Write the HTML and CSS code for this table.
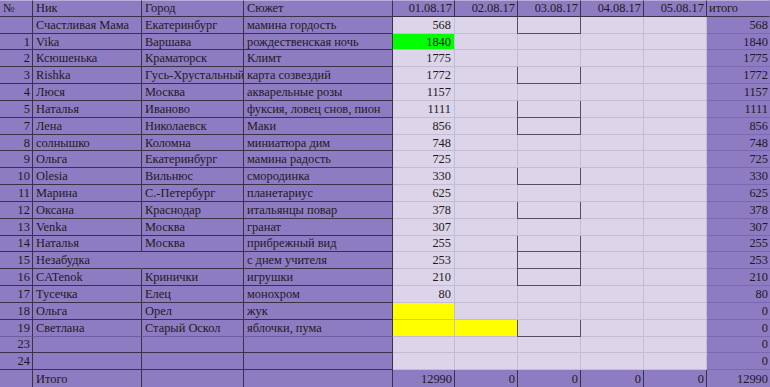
FILE: index.html
```html
<!DOCTYPE html>
<html lang="ru">
<head>
<meta charset="utf-8">
<title>Таблица</title>
<link rel="stylesheet" href="styles.css">
</head>
<body>
<div class="sheet">
  <div class="row hdr">
    <div class="c">№</div><div class="c">Ник</div><div class="c">Город</div><div class="c">Сюжет</div>
    <div class="c r">01.08.17</div><div class="c r">02.08.17</div><div class="c r">03.08.17</div><div class="c r">04.08.17</div><div class="c r">05.08.17</div><div class="c tl">итого</div>
  </div>
  <div class="row">
    <div class="c r"></div><div class="c">Счастливая Мама</div><div class="c">Екатеринбург</div><div class="c">мамина гордость</div>
    <div class="d r">568</div><div class="d"></div><div class="d bx"></div><div class="d"></div><div class="d"></div><div class="t">568</div>
  </div>
  <div class="row">
    <div class="c r">1</div><div class="c">Vika</div><div class="c">Варшава</div><div class="c">рождественская ночь</div>
    <div class="d r green">1840</div><div class="d"></div><div class="d"></div><div class="d"></div><div class="d"></div><div class="t">1840</div>
  </div>
  <div class="row">
    <div class="c r">2</div><div class="c">Ксюшенька</div><div class="c">Краматорск</div><div class="c">Климт</div>
    <div class="d r">1775</div><div class="d"></div><div class="d"></div><div class="d"></div><div class="d"></div><div class="t">1775</div>
  </div>
  <div class="row">
    <div class="c r">3</div><div class="c">Rishka</div><div class="c">Гусь-Хрустальный</div><div class="c">карта созвездий</div>
    <div class="d r">1772</div><div class="d"></div><div class="d bx"></div><div class="d"></div><div class="d"></div><div class="t">1772</div>
  </div>
  <div class="row">
    <div class="c r">4</div><div class="c">Люся</div><div class="c">Москва</div><div class="c">акварельные розы</div>
    <div class="d r">1157</div><div class="d"></div><div class="d"></div><div class="d"></div><div class="d"></div><div class="t">1157</div>
  </div>
  <div class="row">
    <div class="c r">5</div><div class="c">Наталья</div><div class="c">Иваново</div><div class="c">фуксия, ловец снов, пион</div>
    <div class="d r">1111</div><div class="d"></div><div class="d bx"></div><div class="d"></div><div class="d"></div><div class="t">1111</div>
  </div>
  <div class="row">
    <div class="c r">7</div><div class="c">Лена</div><div class="c">Николаевск</div><div class="c">Маки</div>
    <div class="d r">856</div><div class="d"></div><div class="d bx"></div><div class="d"></div><div class="d"></div><div class="t">856</div>
  </div>
  <div class="row">
    <div class="c r">8</div><div class="c">солнышко</div><div class="c">Коломна</div><div class="c">миниатюра дим</div>
    <div class="d r">748</div><div class="d"></div><div class="d"></div><div class="d"></div><div class="d"></div><div class="t">748</div>
  </div>
  <div class="row">
    <div class="c r">9</div><div class="c">Ольга</div><div class="c">Екатеринбург</div><div class="c">мамина радость</div>
    <div class="d r">725</div><div class="d"></div><div class="d"></div><div class="d"></div><div class="d"></div><div class="t">725</div>
  </div>
  <div class="row">
    <div class="c r">10</div><div class="c">Olesia</div><div class="c">Вильнюс</div><div class="c">смородинка</div>
    <div class="d r">330</div><div class="d"></div><div class="d bx"></div><div class="d"></div><div class="d"></div><div class="t">330</div>
  </div>
  <div class="row">
    <div class="c r">11</div><div class="c">Марина</div><div class="c">С.-Петербург</div><div class="c">планетариус</div>
    <div class="d r">625</div><div class="d"></div><div class="d"></div><div class="d"></div><div class="d"></div><div class="t">625</div>
  </div>
  <div class="row">
    <div class="c r">12</div><div class="c">Оксана</div><div class="c">Краснодар</div><div class="c">итальянцы повар</div>
    <div class="d r">378</div><div class="d"></div><div class="d bx"></div><div class="d"></div><div class="d"></div><div class="t">378</div>
  </div>
  <div class="row">
    <div class="c r">13</div><div class="c">Venka</div><div class="c">Москва</div><div class="c">гранат</div>
    <div class="d r">307</div><div class="d"></div><div class="d"></div><div class="d"></div><div class="d"></div><div class="t">307</div>
  </div>
  <div class="row">
    <div class="c r">14</div><div class="c">Наталья</div><div class="c">Москва</div><div class="c">прибрежный вид</div>
    <div class="d r">255</div><div class="d"></div><div class="d bx"></div><div class="d"></div><div class="d"></div><div class="t">255</div>
  </div>
  <div class="row">
    <div class="c r">15</div><div class="c open">Незабудка</div><div class="c"></div><div class="c">с днем учителя</div>
    <div class="d r">253</div><div class="d"></div><div class="d bx"></div><div class="d"></div><div class="d"></div><div class="t">253</div>
  </div>
  <div class="row">
    <div class="c r">16</div><div class="c">CATenok</div><div class="c">Кринички</div><div class="c">игрушки</div>
    <div class="d r">210</div><div class="d"></div><div class="d bx"></div><div class="d"></div><div class="d"></div><div class="t">210</div>
  </div>
  <div class="row">
    <div class="c r">17</div><div class="c">Тусечка</div><div class="c">Елец</div><div class="c">монохром</div>
    <div class="d r">80</div><div class="d"></div><div class="d"></div><div class="d"></div><div class="d"></div><div class="t">80</div>
  </div>
  <div class="row">
    <div class="c r">18</div><div class="c">Ольга</div><div class="c">Орел</div><div class="c">жук</div>
    <div class="d r yellow"></div><div class="d"></div><div class="d"></div><div class="d"></div><div class="d"></div><div class="t">0</div>
  </div>
  <div class="row soft">
    <div class="c r">19</div><div class="c">Светлана</div><div class="c">Старый Оскол</div><div class="c">яблочки, пума</div>
    <div class="d r yellow"></div><div class="d yellow"></div><div class="d bx"></div><div class="d"></div><div class="d"></div><div class="t">0</div>
  </div>
  <div class="row">
    <div class="c r">23</div><div class="c"></div><div class="c"></div><div class="c"></div>
    <div class="d"></div><div class="d"></div><div class="d"></div><div class="d"></div><div class="d"></div><div class="t">0</div>
  </div>
  <div class="row">
    <div class="c r">24</div><div class="c"></div><div class="c"></div><div class="c"></div>
    <div class="d"></div><div class="d"></div><div class="d"></div><div class="d"></div><div class="d"></div><div class="t">0</div>
  </div>
  <div class="row total">
    <div class="c"></div><div class="c">Итого</div><div class="c"></div><div class="c"></div>
    <div class="c r">12990</div><div class="c r">0</div><div class="c r">0</div><div class="c r">0</div><div class="c r">0</div><div class="t">12990</div>
  </div>
</div>
</body>
</html>
```
FILE: styles.css
```css
html, body {
  margin: 0;
  padding: 0;
  background: #ffffff;
}

.sheet {
  display: grid;
  grid-template-columns: 33px 109px 102px 149px 62px 63px 63px 63px 63px 63px;
  grid-template-rows: repeat(23, 1fr);
  width: 770px;
  height: 387px;
  font-family: "Liberation Serif", "Times New Roman", serif;
  font-size: 12.4px;
  color: #1c1a22;
  overflow: hidden;
}

.row {
  display: contents;
}

.c, .d, .t {
  box-sizing: border-box;
  display: flex;
  align-items: center;
  padding: 1px 3px 0 3px;
  white-space: nowrap;
  overflow: hidden;
  min-width: 0;
}

.c {
  background: #8e7cc3;
  border-right: 1px solid #3a3347;
  border-bottom: 1px solid #3a3347;
}

.c.r {
  justify-content: flex-end;
  padding-right: 2px;
}

.c.tl {
  padding-left: 2px;
  border-right-color: #8e7cc3;
}

.c.open {
  border-right-color: #8e7cc3;
}

.d {
  background: #dcd5ea;
  border-right: 1px solid #c4bcd5;
  border-bottom: 1px solid #c4bcd5;
}

.d.r {
  justify-content: flex-end;
  padding-right: 3px;
}

.d.bx {
  border-right-color: #55505e;
  border-bottom-color: #55505e;
  box-shadow: -1px 0 0 #55505e;
}

.d.green {
  background: #00ff00;
}

.d.yellow {
  background: #ffff00;
}

.t {
  background: #8e7cc3;
  justify-content: flex-end;
  padding-right: 2px;
  border-bottom: 1px solid #7a68b2;
}

.soft .c {
  border-bottom-color: #6d5ea0;
}

.total .c {
  border-bottom: none;
}

.total .t {
  border-bottom: none;
}

.hdr .c {
  border-top: 1px solid #b8aedb;
}

.hdr .t, .hdr .c.tl {
  border-bottom-color: #3a3347;
}
```
